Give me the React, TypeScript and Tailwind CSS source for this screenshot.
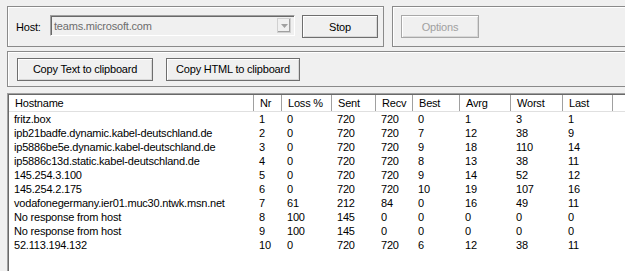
import React from "react";

const cols = [
  { name: "Hostname", w: 245 },
  { name: "Nr", w: 28 },
  { name: "Loss %", w: 50 },
  { name: "Sent", w: 44 },
  { name: "Recv", w: 37 },
  { name: "Best", w: 47 },
  { name: "Avrg", w: 51 },
  { name: "Worst", w: 52 },
  { name: "Last", w: 50 },
];

const rows: string[][] = [
  ["fritz.box", "1", "0", "720", "720", "0", "1", "3", "1"],
  ["ipb21badfe.dynamic.kabel-deutschland.de", "2", "0", "720", "720", "7", "12", "38", "9"],
  ["ip5886be5e.dynamic.kabel-deutschland.de", "3", "0", "720", "720", "9", "18", "110", "14"],
  ["ip5886c13d.static.kabel-deutschland.de", "4", "0", "720", "720", "8", "13", "38", "11"],
  ["145.254.3.100", "5", "0", "720", "720", "9", "14", "52", "12"],
  ["145.254.2.175", "6", "0", "720", "720", "10", "19", "107", "16"],
  ["vodafonegermany.ier01.muc30.ntwk.msn.net", "7", "61", "212", "84", "0", "16", "49", "11"],
  ["No response from host", "8", "100", "145", "0", "0", "0", "0", "0"],
  ["No response from host", "9", "100", "145", "0", "0", "0", "0", "0"],
  ["52.113.194.132", "10", "0", "720", "720", "6", "12", "38", "11"],
];

function Btn({ label, w, disabled }: { label: string; w: string; disabled?: boolean }) {
  return (
    <div
      className={`${w} h-[23px] shrink-0 border bg-[#f0f0f0] shadow-[inset_1px_1px_0_#ffffff,inset_-1px_-1px_0_#d8d8d8] flex items-center justify-center ${
        disabled ? "text-[#a0a0a0] border-[#a8a8a8]" : "text-black border-[#6e6e6e]"
      }`}
    >
      {label}
    </div>
  );
}

export default function App() {
  return (
    <div
      className="w-[625px] h-[271px] overflow-hidden bg-[#f0f0f0] text-[11px] leading-[14px] tracking-[-0.2px] text-black"
      style={{ fontFamily: '"Liberation Sans", Arial, sans-serif' }}
    >
      <div className="pl-[7px] pt-[6px] flex flex-col">
        {/* Row 1 */}
        <div className="flex gap-[8px] w-[700px]">
          <div className="w-[377px] h-[41px] border border-[#8a8a8a] shadow-[inset_1px_1px_0_#ffffff] flex items-center pl-[8px] shrink-0">
            <span className="w-[34px]">Host:</span>
            <div className="w-[245px] h-[21px] border border-t-[#a0a0a0] border-l-[#a0a0a0] border-b-[#ffffff] border-r-[#ffffff] shadow-[inset_1px_1px_0_#696969] flex items-center pl-[3px] pr-[3px] text-[#6d6d6d] -mt-[2px]">
              <span className="flex-1">teams.microsoft.com</span>
              <div className="w-[14px] h-[15px] border border-[#d0d0d0] shadow-[inset_-1px_-1px_0_#a0a0a0] flex items-center justify-center">
                <svg width="7" height="4" viewBox="0 0 7 4">
                  <path d="M0 0H7L3.5 4Z" fill="#a0a0a0" />
                </svg>
              </div>
            </div>
            <div className="ml-[7px]">
              <Btn label="Stop" w="w-[76px]" />
            </div>
          </div>
          <div className="w-[300px] h-[41px] border border-[#8a8a8a] shadow-[inset_1px_1px_0_#ffffff] flex items-center pl-[8px] shrink-0">
            <Btn label="Options" w="w-[78px]" disabled />
          </div>
        </div>
        {/* Row 2 */}
        <div className="mt-[4px] w-[700px] h-[36px] border border-[#8a8a8a] shadow-[inset_1px_1px_0_#ffffff] flex items-center pl-[9px] gap-[13px]">
          <Btn label="Copy Text to clipboard" w="w-[136px]" />
          <Btn label="Copy HTML to clipboard" w="w-[134px]" />
        </div>
        {/* List */}
        <div className="mt-[6px] w-[700px] h-[200px] border border-t-[#a0a0a0] border-l-[#a0a0a0] border-r-white border-b-white bg-white shadow-[inset_1px_1px_0_#696969] pl-[1px] pt-[1px]">
          <div className="flex h-[17px] bg-white border-b border-[#e0e0e0]">
            {cols.map((c) => (
              <div
                key={c.name}
                className="shrink-0 border-r border-[#a0a0a0] pl-[6px] flex items-center"
                style={{ width: c.w }}
              >
                {c.name}
              </div>
            ))}
            <div className="flex-1" />
          </div>
          {rows.map((r, i) => (
            <div key={i} className="flex h-[14px]">
              {r.map((v, j) => (
                <div
                  key={j}
                  className="shrink-0 pl-[5px] whitespace-nowrap"
                  style={{ width: cols[j].w }}
                >
                  {v}
                </div>
              ))}
            </div>
          ))}
        </div>
      </div>
    </div>
  );
}
